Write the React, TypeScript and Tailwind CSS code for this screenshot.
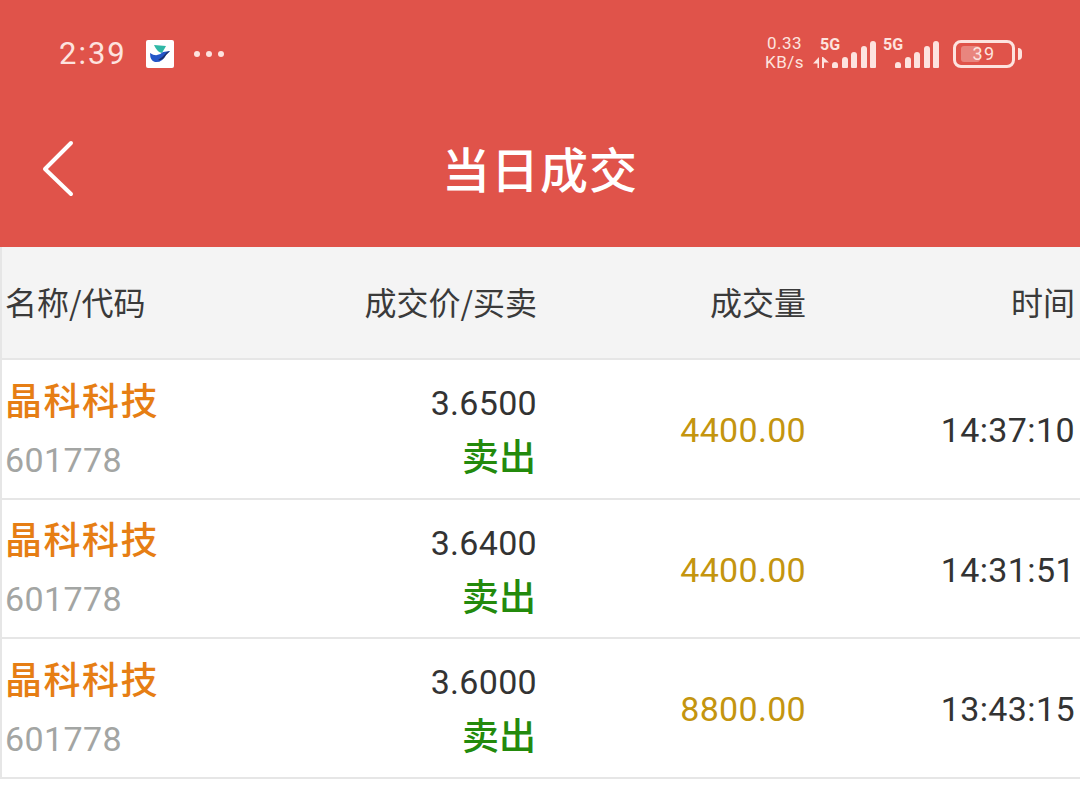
import React from 'react';

const cjk = { fontFamily: '"Noto Sans CJK SC", "Liberation Sans", sans-serif' };
const num = { fontFamily: '"Roboto", sans-serif' };

const trades = [
  { price: '3.6500', vol: '4400.00', time: '14:37:10' },
  { price: '3.6400', vol: '4400.00', time: '14:31:51' },
  { price: '3.6000', vol: '8800.00', time: '13:43:15' },
];

const Signal = () => (
  <div className="flex items-end gap-[3.5px]">
    {[6, 11, 16, 22, 27].map((h, i) => (
      <div key={i} className="w-[6px] rounded-t-[3px] rounded-b-[1px] bg-[#fde3df]" style={{ height: h }} />
    ))}
  </div>
);

const AppIcon = () => (
  <div className="flex h-[28px] w-[28px] items-center justify-center rounded-[2px] bg-white">
    <svg width="22" height="22" viewBox="0 0 22 22">
      <path d="M5 2 L17 3 L13 10 Q8 9 5 2Z" fill="#2fb8a6" />
      <path d="M1 10 Q8 15 14 9 L21 8 L17 12 Q13 20 6 19 Q1 18 1 10Z" fill="#2456c8" />
      <path d="M9 17 Q14 14 18 9 L21 8 L17 12 Q14 18 9 17Z" fill="#1b2f6b" />
    </svg>
  </div>
);

const StatusBar = () => (
  <div className="flex h-[108px] items-start justify-between pl-[59px] pr-[58px] pt-[32px]">
    <div className="mt-[4px] flex items-center">
      <span className="w-[64px] text-[31px] leading-[36px] tracking-[2px] text-[#fde3df]" style={num}>2:39</span>
      <div className="ml-[23px]"><AppIcon /></div>
      <div className="ml-[20px] flex gap-[6px]">
        <div className="h-[6px] w-[6px] rounded-full bg-[#fde3df]" />
        <div className="h-[6px] w-[6px] rounded-full bg-[#fde3df]" />
        <div className="h-[6px] w-[6px] rounded-full bg-[#fde3df]" />
      </div>
    </div>
    <div className="flex items-start" style={num}>
      <div className="mt-[2px] flex w-[37px] flex-col items-center text-[17px] leading-[19px] tracking-[0.5px] text-[#fde3df]">
        <span>0.33</span>
        <span>KB/s</span>
      </div>
      <div className="relative ml-[10px] flex h-[36px] w-[63px] items-end justify-end">
        <span className="absolute left-[7px] top-[5px] text-[16px] font-bold leading-[16px] text-[#fde3df]">5G</span>
        <svg className="absolute bottom-0 left-0" width="16" height="11" viewBox="0 0 16 11">
          <path d="M6 0 V11 H4.5 V6.5 H0 Z" fill="#fde3df" />
          <path d="M9 0 V11 H11 V5.5 H16 L10 0 Z" fill="#fde3df" />
        </svg>
        <Signal />
      </div>
      <div className="relative ml-[7px] flex h-[36px] w-[56px] items-end justify-end">
        <span className="absolute left-0 top-[5px] text-[16px] font-bold leading-[16px] text-[#fde3df]">5G</span>
        <Signal />
      </div>
      <div className="ml-[14px] mt-[8px] flex items-center gap-[3px]">
        <div className="relative flex h-[28px] w-[62px] items-center justify-center rounded-[8px] border-[3px] border-[#fde3df]">
          <div className="absolute bottom-[3px] left-[5px] top-[3px] w-[19px] rounded-[3px] bg-[#e9857e]" />
          <span className="relative text-[18px] leading-none tracking-[1.5px] text-[#fde3df]">39</span>
        </div>
        <div className="h-[12px] w-[4px] rounded-r-full bg-[#fde3df]" />
      </div>
    </div>
  </div>
);

const App = () => {
  return (
    <div className="h-[788px] w-[1080px] overflow-hidden bg-white">
      <div className="h-[247px] bg-[#e0534a]">
        <StatusBar />
        <div className="relative flex h-[122px] items-center justify-center pb-[4px]">
          <svg className="absolute left-[41px] top-[32px]" width="34" height="58" viewBox="0 0 34 58" fill="none" stroke="#fff" strokeWidth="4" strokeLinecap="round" strokeLinejoin="round">
            <path d="M30 3 L4 29 L30 54" />
          </svg>
          <span className="text-[48px] font-medium leading-none tracking-[1px] text-white" style={cjk}>当日成交</span>
        </div>
      </div>

      <div className="grid h-[113px] grid-cols-[1fr_231px_269px_269px] items-center border-b-2 border-l-2 border-[#e6e6e6] bg-[#f4f4f4] pb-[3px] pr-[5px] text-[32px] text-[#3a3a3a]" style={cjk}>
        <span className="pl-[3px]">名称/代码</span>
        <span className="text-right">成交价/买卖</span>
        <span className="text-right">成交量</span>
        <span className="text-right">时间</span>
      </div>

      {trades.map((t) => (
        <div key={t.time} className="grid h-[139.5px] grid-cols-[1fr_231px_269px_269px] items-center border-b-2 border-l-2 border-[#e6e6e6] pr-[5px]">
          <div className="flex flex-col gap-[20px] pl-[3px]">
            <span className="text-[37px] font-medium leading-[42px] tracking-[1.5px] text-[#e67e14]" style={cjk}>晶科科技</span>
            <span className="text-[34px] leading-[40px] tracking-[0.4px] text-[#a3a5a3]" style={num}>601778</span>
          </div>
          <div className="flex flex-col items-end gap-[9px] pt-[4px]">
            <span className="text-[34px] leading-[40px] tracking-[0.3px] text-[#333]" style={num}>{t.price}</span>
            <span className="pr-[1px] text-[37px] font-medium leading-[46px] text-[#238a0c]" style={cjk}>卖出</span>
          </div>
          <span className="pt-[4px] text-right text-[34px] tracking-[0.3px] text-[#c4950f]" style={num}>{t.vol}</span>
          <span className="pt-[4px] text-right text-[34px] tracking-[0.4px] text-[#333]" style={num}>{t.time}</span>
        </div>
      ))}
    </div>
  );
};

export default App;
